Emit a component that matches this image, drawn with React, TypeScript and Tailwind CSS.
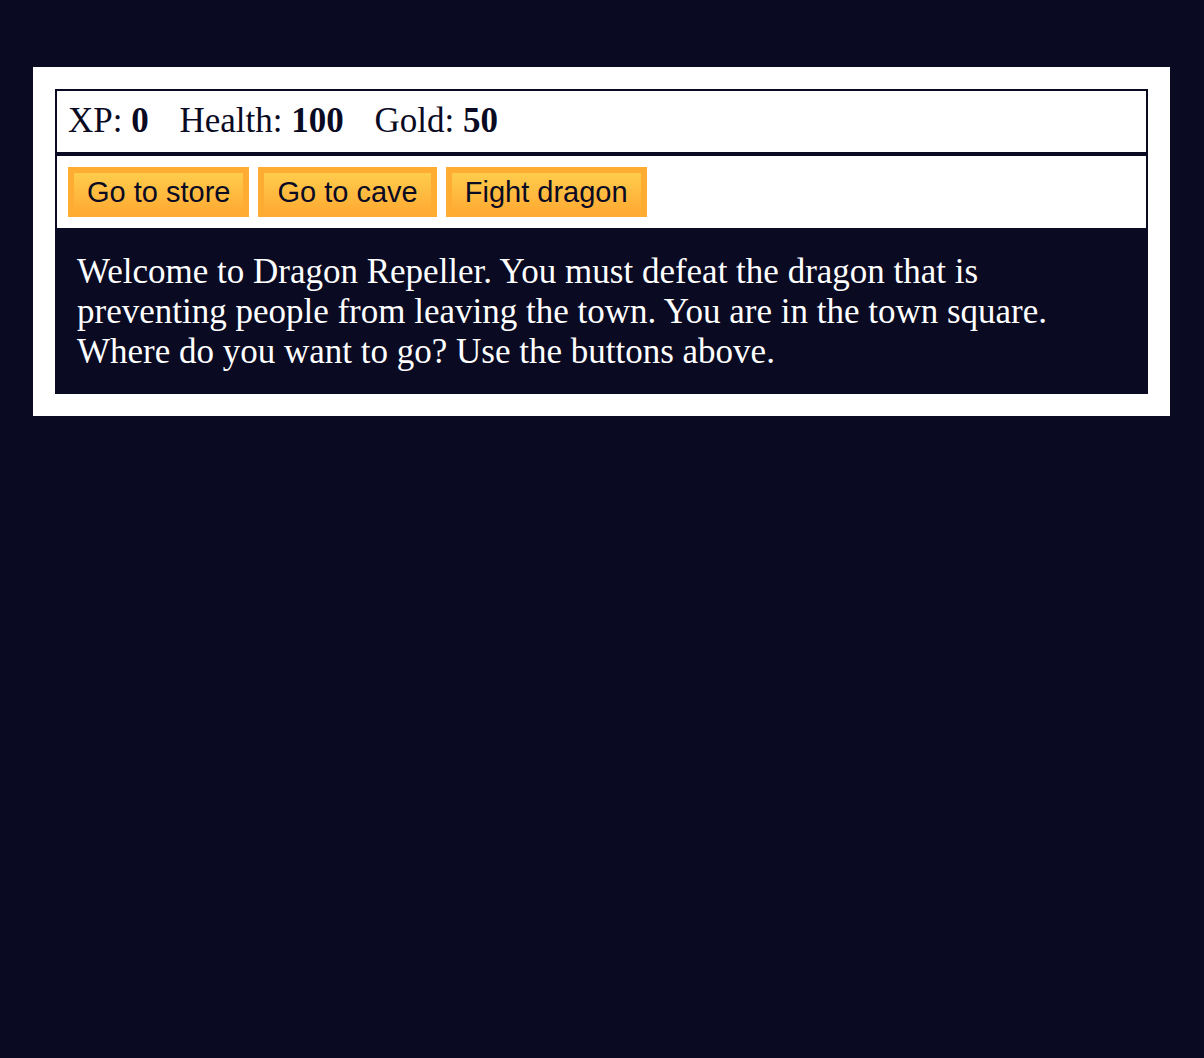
import React from 'react';

const serif = "font-['Liberation_Serif','Times_New_Roman',serif]";
const sans = "font-['Liberation_Sans',Arial,sans-serif]";

export default function App() {
  const buttons = ['Go to store', 'Go to cave', 'Fight dragon'];

  return (
    <div className={`min-h-screen bg-[#0a0a23] pt-[67px] ${serif}`}>
      <div className="ml-[33px] w-[1137px] bg-white p-[22px]">
        {/* Stats */}
        <div className="border-2 border-[#0a0a23] px-[11px] pt-[10px] pb-[11px] text-[35px] leading-[40px] text-[#0a0a23]">
          <span className="pr-[22px]">
            XP: <strong>0</strong>
          </span>{' '}
          <span className="pr-[22px]">
            Health: <strong>100</strong>
          </span>{' '}
          <span className="pr-[22px]">
            Gold: <strong>50</strong>
          </span>
        </div>

        {/* Controls */}
        <div className="flex gap-[9px] border-2 border-[#0a0a23] px-[11px] pt-[11px] pb-[11px]">
          {buttons.map((label) => (
            <button
              key={label}
              type="button"
              className={`cursor-pointer border-[6px] border-[#feac32] bg-gradient-to-b from-[#fecc4c] to-[#ffac33] px-[13px] py-[2px] text-[29px] leading-[34px] text-[#0a0a23] ${sans}`}
            >
              {label}
            </button>
          ))}
        </div>

        {/* Text */}
        <div className="bg-[#0a0a23] p-[22px] text-[35px] leading-[40px] text-white">
          Welcome to Dragon Repeller. You must defeat the dragon that is
          preventing people from leaving the town. You are in the town square.
          Where do you want to go? Use the buttons above.
        </div>
      </div>
    </div>
  );
}
